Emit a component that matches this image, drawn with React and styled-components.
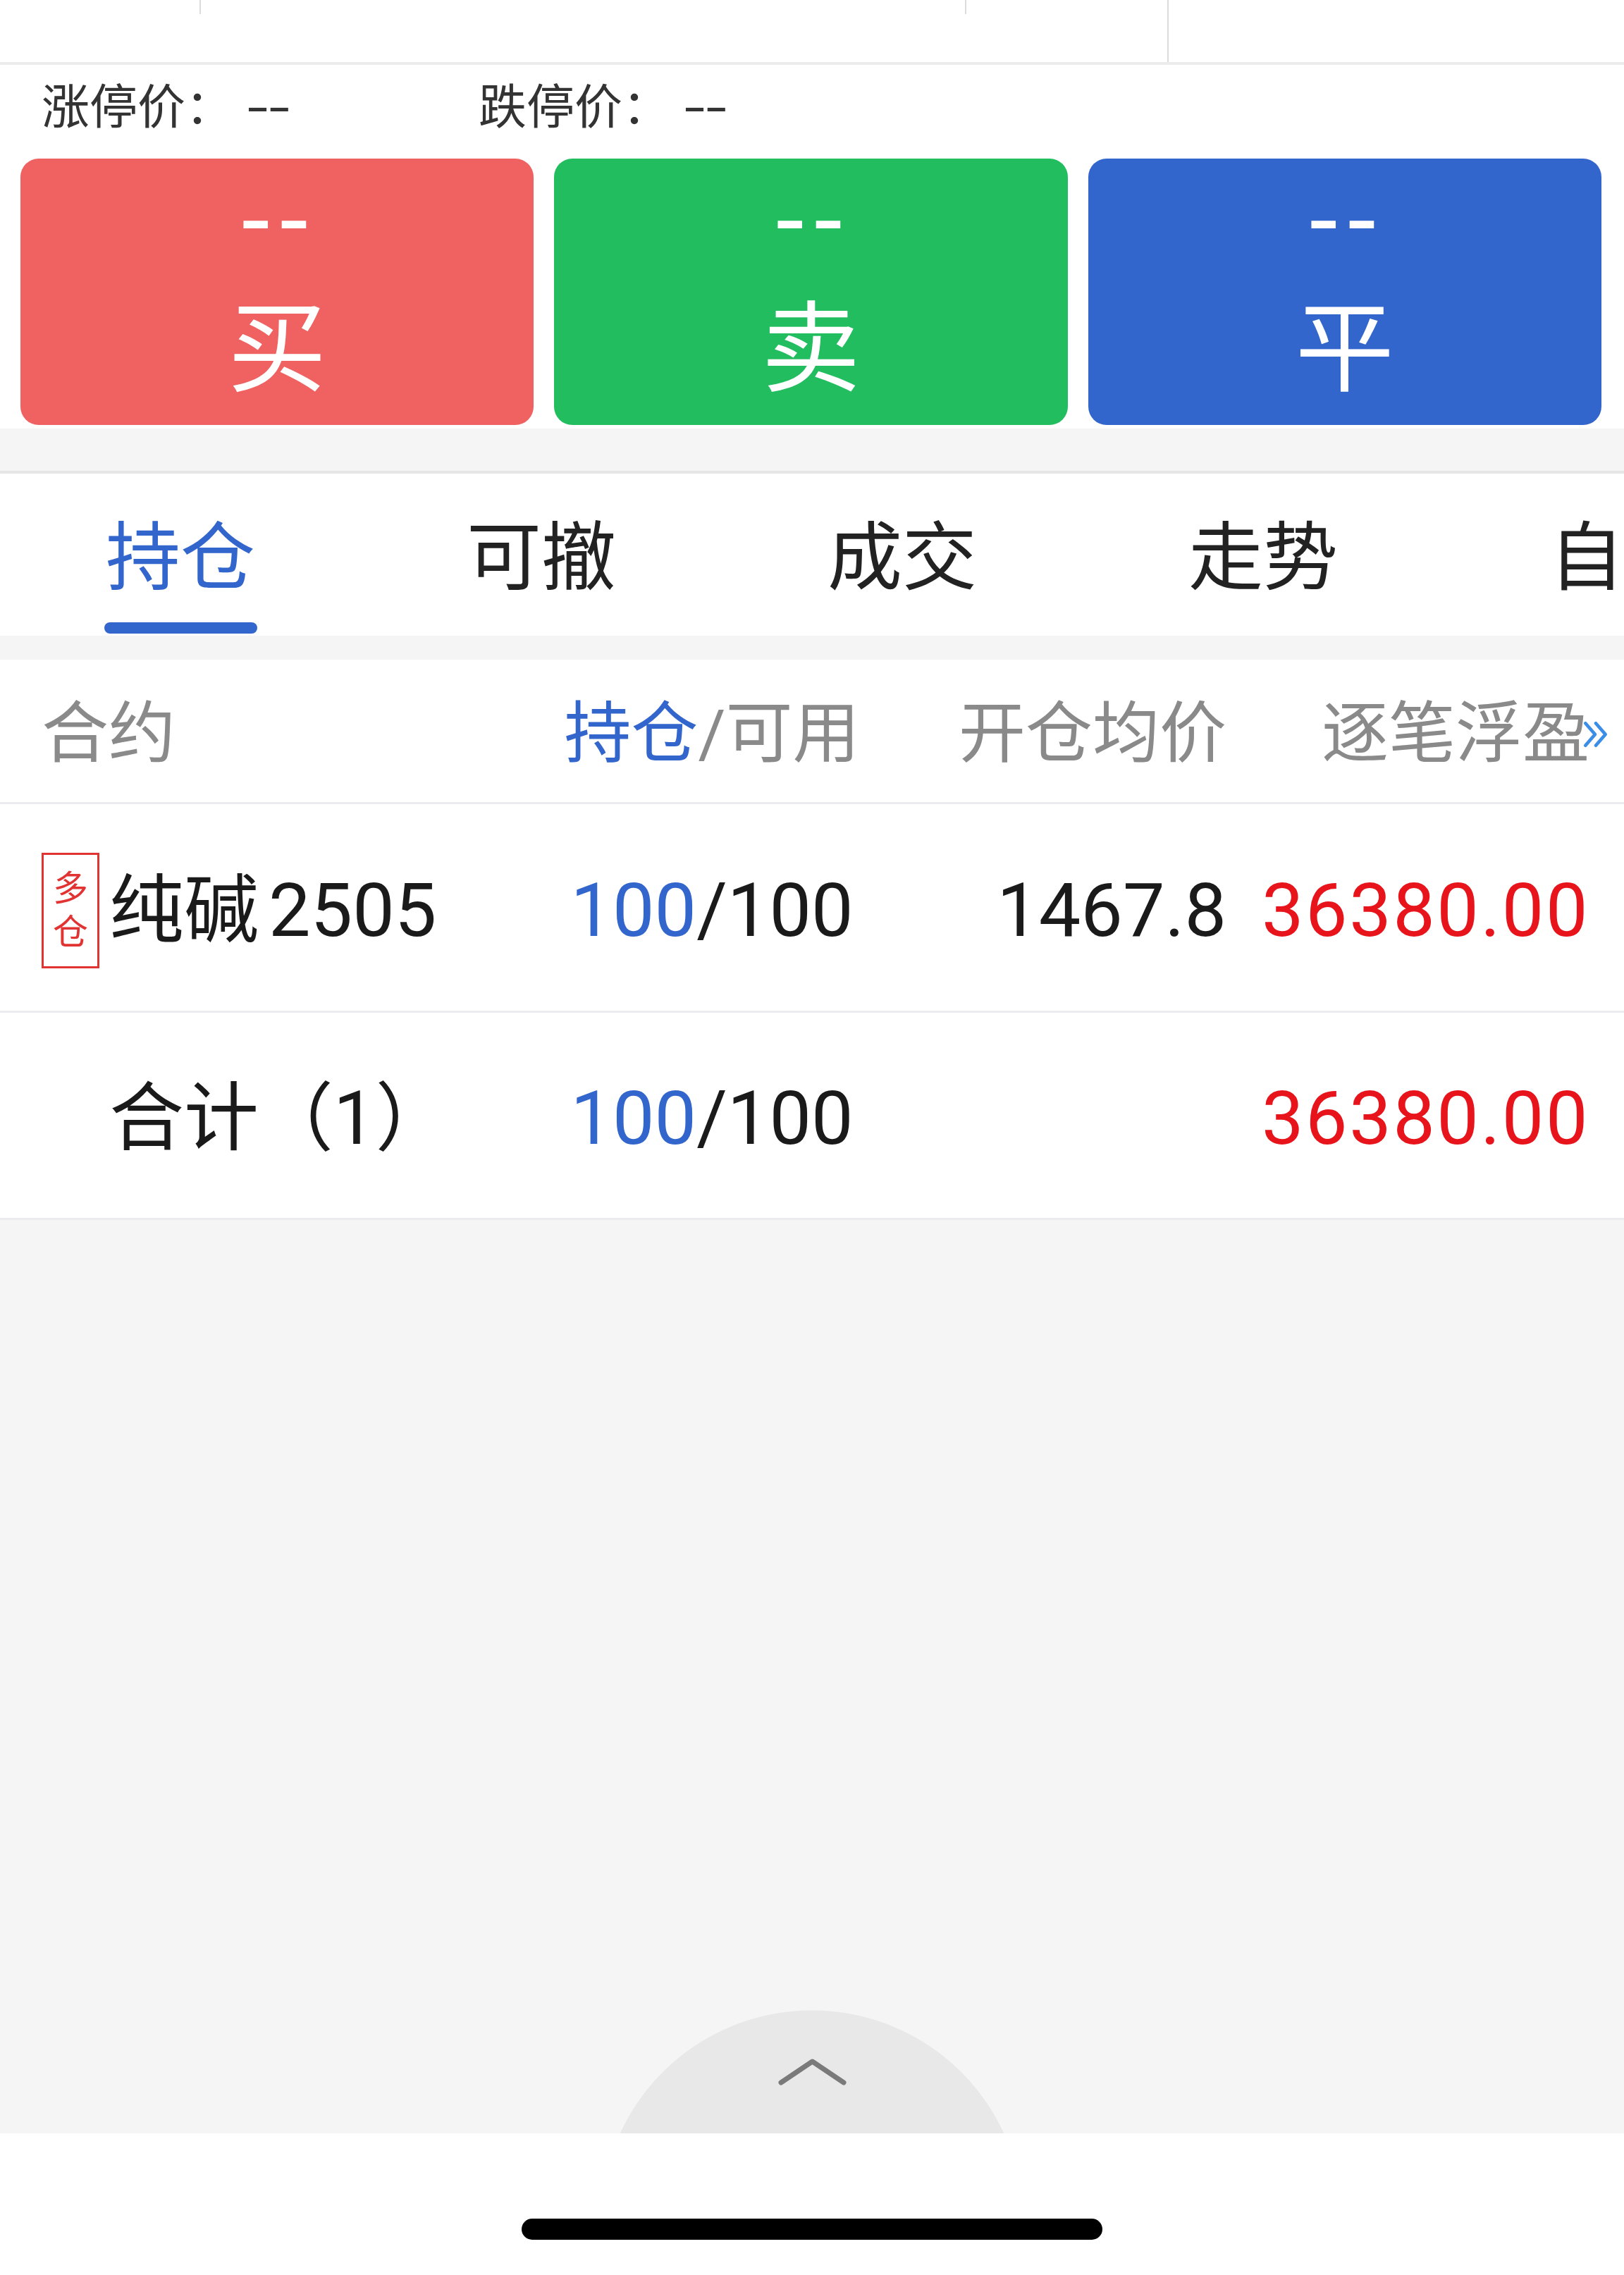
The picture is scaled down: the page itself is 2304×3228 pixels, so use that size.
import React from "react";
import styled, { createGlobalStyle } from "styled-components";

const GlobalStyle = createGlobalStyle`
  html, body {
    margin: 0;
    padding: 0;
    background: #ffffff;
  }
  body {
    font-family: Roboto, "Noto Sans CJK SC", sans-serif;
    color: #1a1a1a;
  }
  * {
    box-sizing: border-box;
  }
`;

const tabs = ["持仓", "可撤", "成交", "走势", "自选"];

function App() {
  return (
    <>
      <GlobalStyle />
      <Page>
        <TopStrip>
          <Tick $left={283} $h={20} />
          <Tick $left={1084} $h={20} />
          <Tick $left={285} $h={88} />
        </TopStrip>

        <OrderPanel>
          <LimitRow>
            <LimitItem $w={620}>
              涨停价：<Dash>--</Dash>
            </LimitItem>
            <LimitItem>
              跌停价：<Dash>--</Dash>
            </LimitItem>
          </LimitRow>
          <ButtonRow>
            <TradeButton $bg="#f06161">
              <BtnPrice>--</BtnPrice>
              <BtnLabel>买</BtnLabel>
            </TradeButton>
            <TradeButton $bg="#21bd5f">
              <BtnPrice>--</BtnPrice>
              <BtnLabel>卖</BtnLabel>
            </TradeButton>
            <TradeButton $bg="#3366cc">
              <BtnPrice>--</BtnPrice>
              <BtnLabel>平</BtnLabel>
            </TradeButton>
          </ButtonRow>
        </OrderPanel>

        <Band $h={60} />

        <TabBar>
          {tabs.map((t, i) => (
            <Tab key={t}>
              <TabLabel $active={i === 0}>{t}</TabLabel>
              <TabLine $active={i === 0} />
            </Tab>
          ))}
        </TabBar>

        <Band $h={34} />

        <HeaderRow>
          <HeadCell>合约</HeadCell>
          <HeadCell $align="center">
            <Blue>持仓</Blue>/可用
          </HeadCell>
          <HeadCell $align="right">开仓均价</HeadCell>
          <HeadCell $align="right">
            逐笔浮盈
            <MoreIcon viewBox="0 0 40 38">
              <polyline points="6,4 19,19 6,34" />
              <polyline points="20,4 33,19 20,34" />
            </MoreIcon>
          </HeadCell>
        </HeaderRow>

        <Row $h={296}>
          <NameCell>
            <Badge>
              <span>多</span>
              <span>仓</span>
            </Badge>
            <Name>
              纯碱<Code>2505</Code>
            </Name>
          </NameCell>
          <Cell $align="center">
            <Blue>100</Blue>/100
          </Cell>
          <Cell $align="right">1467.8</Cell>
          <Cell $align="right" $red>
            36380.00
          </Cell>
        </Row>

        <Row $h={294}>
          <NameCell>
            <Name $indent>合计（1）</Name>
          </NameCell>
          <Cell $align="center">
            <Blue>100</Blue>/100
          </Cell>
          <Cell $align="right"></Cell>
          <Cell $align="right" $red>
            36380.00
          </Cell>
        </Row>

        <EmptyArea>
          <PullTab>
            <svg width="97" height="38" viewBox="0 0 97 38">
              <polyline
                points="4,34 48.5,4 93,34"
                fill="none"
                stroke="#7a7a7a"
                strokeWidth="7"
                strokeLinecap="round"
                strokeLinejoin="round"
              />
            </svg>
          </PullTab>
        </EmptyArea>

        <BottomBar>
          <HomeBar />
        </BottomBar>
      </Page>
    </>
  );
}

const Page = styled.div`
  width: 2304px;
  height: 3228px;
  display: flex;
  flex-direction: column;
  background: #f5f5f5;
  overflow: hidden;
`;

const TopStrip = styled.div`
  height: 92px;
  flex-shrink: 0;
  display: flex;
  align-items: flex-start;
  background: #ffffff;
  border-bottom: 4px solid #ececec;
`;

const Tick = styled.div`
  width: 2px;
  height: ${(p) => p.$h}px;
  margin-left: ${(p) => p.$left}px;
  background: #dcdcdc;
`;

const OrderPanel = styled.div`
  flex-shrink: 0;
  background: #ffffff;
  padding: 0 32px 5px 29px;
`;

const LimitRow = styled.div`
  height: 118px;
  display: flex;
  align-items: center;
  padding: 0 0 10px 30px;
  font-size: 68px;
  color: #333333;
`;

const LimitItem = styled.div`
  width: ${(p) => (p.$w ? `${p.$w}px` : "auto")};
  white-space: nowrap;
`;

const Dash = styled.span`
  display: inline-block;
  margin-left: 20px;
  letter-spacing: 1px;
  transform: scaleX(1.55);
  transform-origin: left center;
`;

const ButtonRow = styled.div`
  margin-top: 15px;
  display: grid;
  grid-template-columns: repeat(3, 1fr);
  gap: 29px;
`;

const TradeButton = styled.div`
  height: 378px;
  border-radius: 26px;
  background: ${(p) => p.$bg};
  color: #ffffff;
  display: flex;
  flex-direction: column;
  align-items: center;
  padding-top: 35px;
`;

const BtnPrice = styled.div`
  font-size: 96px;
  font-weight: 700;
  line-height: 110px;
  letter-spacing: 4px;
  transform: scaleX(1.3);
`;

const BtnLabel = styled.div`
  margin-top: 46px;
  font-size: 140px;
  line-height: 160px;
`;

const Band = styled.div`
  height: ${(p) => p.$h}px;
  flex-shrink: 0;
  background: #f5f5f5;
`;

const TabBar = styled.div`
  height: 234px;
  flex-shrink: 0;
  display: flex;
  overflow: hidden;
  background: #ffffff;
  border-top: 4px solid #e6e6e6;
`;

const Tab = styled.div`
  width: 512px;
  flex-shrink: 0;
  display: flex;
  flex-direction: column;
  align-items: center;
  padding-top: 55px;
`;

const TabLabel = styled.div`
  font-size: 106px;
  line-height: 130px;
  color: ${(p) => (p.$active ? "#3366cc" : "#222222")};
`;

const TabLine = styled.div`
  margin-top: 26px;
  width: 217px;
  height: 16px;
  border-radius: 8px;
  background: ${(p) => (p.$active ? "#3366cc" : "transparent")};
`;

const HeaderRow = styled.div`
  height: 205px;
  flex-shrink: 0;
  display: grid;
  grid-template-columns: 701px 500px 480px 515px;
  align-items: center;
  padding: 10px 49px 0 59px;
  background: #ffffff;
  border-bottom: 3px solid #ebebf0;
`;

const HeadCell = styled.div`
  position: relative;
  text-align: ${(p) => p.$align || "left"};
  font-size: 95px;
  line-height: 120px;
  color: #8a8a8a;
  white-space: nowrap;
`;

const MoreIcon = styled.svg`
  position: absolute;
  right: -30px;
  top: 40px;
  width: 42px;
  height: 40px;
  fill: none;
  stroke: #3a8ee8;
  stroke-width: 4.5;
  stroke-linecap: round;
  stroke-linejoin: round;
`;

const Blue = styled.span`
  color: #3366cc;
`;

const Row = styled.div`
  height: ${(p) => p.$h}px;
  flex-shrink: 0;
  display: grid;
  grid-template-columns: 701px 500px 480px 515px;
  align-items: center;
  padding: 8px 49px 0 59px;
  background: #ffffff;
  border-bottom: 3px solid #ebebf0;
`;

const NameCell = styled.div`
  display: flex;
  align-items: center;
`;

const Badge = styled.div`
  width: 82px;
  height: 164px;
  border: 3px solid #e23333;
  color: #e23333;
  font-size: 50px;
  line-height: 62px;
  display: flex;
  flex-direction: column;
  align-items: center;
  justify-content: center;
`;

const Name = styled.div`
  margin-left: ${(p) => (p.$indent ? "96px" : "14px")};
  font-size: 106px;
  line-height: 130px;
  color: #1a1a1a;
  white-space: nowrap;
`;

const Code = styled.span`
  margin-left: 14px;
`;

const Cell = styled.div`
  text-align: ${(p) => p.$align || "left"};
  font-size: 106px;
  line-height: 130px;
  letter-spacing: ${(p) => (p.$red ? "2.5px" : "0")};
  color: ${(p) => (p.$red ? "#e8141b" : "#1a1a1a")};
  white-space: nowrap;
`;

const EmptyArea = styled.div`
  flex: 1;
  display: flex;
  flex-direction: column;
  justify-content: flex-end;
  align-items: center;
  background: #f5f5f5;
`;

const PullTab = styled.div`
  width: 546px;
  height: 175px;
  display: flex;
  justify-content: center;
  padding-top: 69px;
  background: radial-gradient(
    circle 300px at 50% 300px,
    #e8e8e8 299px,
    transparent 300px
  );
`;

const BottomBar = styled.div`
  height: 201px;
  flex-shrink: 0;
  background: #ffffff;
  padding-top: 121px;
`;

const HomeBar = styled.div`
  width: 824px;
  height: 30px;
  margin: 0 auto;
  border-radius: 15px;
  background: #000000;
`;

export default App;
